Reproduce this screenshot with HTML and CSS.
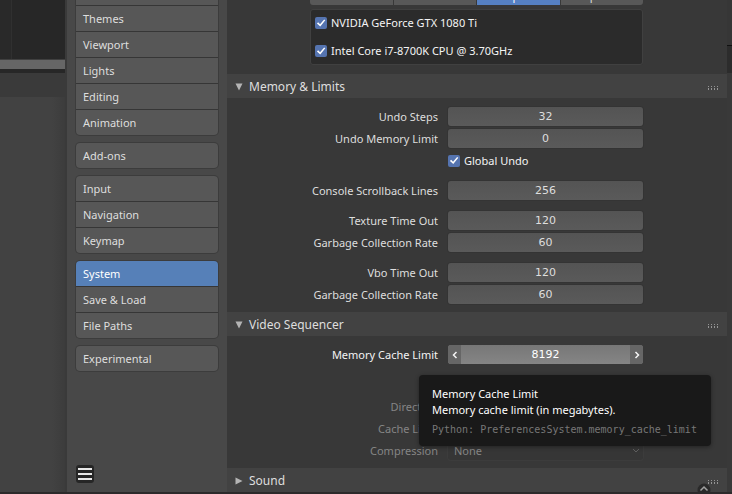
FILE: index.html
```html
<!DOCTYPE html>
<html lang="en">
<head>
<meta charset="utf-8">
<title>Preferences</title>
<link rel="stylesheet" href="styles.css">
</head>
<body>
<div class="app">
  <div class="backdrop">
    <div class="backdrop-timeline"></div>
    <div class="backdrop-divider"></div>
    <div class="backdrop-header"></div>
    <div class="backdrop-editor"></div>
  </div>

  <nav class="sidebar">
    <div class="nav-group nav-group-scrolled">
      <div class="nav-stub" aria-hidden="true"></div>
      <button class="nav-item">Themes</button>
      <button class="nav-item">Viewport</button>
      <button class="nav-item">Lights</button>
      <button class="nav-item">Editing</button>
      <button class="nav-item">Animation</button>
    </div>
    <div class="nav-group">
      <button class="nav-item">Add-ons</button>
    </div>
    <div class="nav-group">
      <button class="nav-item">Input</button>
      <button class="nav-item">Navigation</button>
      <button class="nav-item">Keymap</button>
    </div>
    <div class="nav-group">
      <button class="nav-item active" aria-current="page">System</button>
      <button class="nav-item">Save &amp; Load</button>
      <button class="nav-item">File Paths</button>
    </div>
    <div class="nav-group">
      <button class="nav-item">Experimental</button>
    </div>
    <button class="menu-button" aria-label="Menu">
      <svg width="18" height="18" viewBox="0 0 18 18">
        <rect width="18" height="18" rx="3" fill="#262626"/>
        <path d="M2 4h14M2 9h14M2 14h14" stroke="#e8e8e8" stroke-width="2"/>
      </svg>
    </button>
  </nav>

  <main class="panel">
    <div class="devices">
      <div class="segments">
        <button class="segment">None</button>
        <button class="segment">CUDA</button>
        <button class="segment active">OptiX</button>
        <button class="segment">OpenCL</button>
      </div>
      <div class="device-list">
        <label class="check bright"><input type="checkbox" checked>NVIDIA GeForce GTX 1080 Ti</label>
        <label class="check bright"><input type="checkbox" checked>Intel Core i7-8700K CPU @ 3.70GHz</label>
      </div>
    </div>

    <section>
      <h2 class="section-head">
        <svg class="arrow" width="8" height="8" viewBox="0 0 8 8"><path d="M0.5 0.5h7L4 7.5z" fill="#b4b4b4"/></svg>
        Memory &amp; Limits
        <span class="grip"></span>
      </h2>
      <div class="section-body">
        <div class="rows">
          <div class="row"><label for="undo-steps">Undo Steps</label><input class="number" id="undo-steps" type="text" value="32"></div>
          <div class="row"><label for="undo-memory">Undo Memory Limit</label><input class="number" id="undo-memory" type="text" value="0"></div>
          <div class="row"><span></span><label class="check bright in-row"><input type="checkbox" checked>Global Undo</label></div>
        </div>
        <div class="rows">
          <div class="row"><label for="scrollback">Console Scrollback Lines</label><input class="number" id="scrollback" type="text" value="256"></div>
        </div>
        <div class="rows">
          <div class="row"><label for="texture-time">Texture Time Out</label><input class="number" id="texture-time" type="text" value="120"></div>
          <div class="row"><label for="texture-rate">Garbage Collection Rate</label><input class="number" id="texture-rate" type="text" value="60"></div>
        </div>
        <div class="rows">
          <div class="row"><label for="vbo-time">Vbo Time Out</label><input class="number" id="vbo-time" type="text" value="120"></div>
          <div class="row"><label for="vbo-rate">Garbage Collection Rate</label><input class="number" id="vbo-rate" type="text" value="60"></div>
        </div>
      </div>
    </section>

    <section>
      <h2 class="section-head">
        <svg class="arrow" width="8" height="8" viewBox="0 0 8 8"><path d="M0.5 0.5h7L4 7.5z" fill="#b4b4b4"/></svg>
        Video Sequencer
        <span class="grip"></span>
      </h2>
      <div class="section-body">
        <div class="rows">
          <div class="row">
            <label class="bright" for="cache-limit">Memory Cache Limit</label>
            <div class="stepper">
              <button class="step" aria-label="Decrease"><svg width="6" height="8" viewBox="0 0 6 8"><path d="M4.5 1L1.5 4l3 3"/></svg></button>
              <input id="cache-limit" type="text" value="8192">
              <button class="step" aria-label="Increase"><svg width="6" height="8" viewBox="0 0 6 8"><path d="M1.5 1l3 3-3 3"/></svg></button>
              <div class="tooltip" role="tooltip">
                <p>Memory Cache Limit</p>
                <p>Memory cache limit (in megabytes).</p>
                <p class="python">Python: PreferencesSystem.memory_cache_limit</p>
              </div>
            </div>
          </div>
        </div>
        <div class="rows disabled">
          <div class="row"></div>
          <div class="row"><label for="directory">Directory</label><input class="number" id="directory" type="text" disabled></div>
          <div class="row"><label for="disk-limit">Cache Limit</label><input class="number" id="disk-limit" type="text" disabled></div>
          <div class="row">
            <label for="compression">Compression</label>
            <div class="select">
              <select id="compression" disabled><option>None</option></select>
              <svg width="8" height="6" viewBox="0 0 8 6"><path d="M1 1l3 3 3-3"/></svg>
            </div>
          </div>
        </div>
      </div>
    </section>

    <section>
      <h2 class="section-head">
        <svg class="arrow" width="8" height="8" viewBox="0 0 8 8"><path d="M0.5 0.5v7L7.5 4z" fill="#b4b4b4"/></svg>
        Sound
        <span class="grip"></span>
      </h2>
    </section>

    <button class="expand" aria-label="Show header">
      <svg width="14" height="14" viewBox="0 0 14 14">
        <circle cx="7" cy="7" r="6.5" fill="#2a2a2a"/>
        <path d="M3.500 7.500L7 4l3.500 3.500" fill="none" stroke="#a0a0a0" stroke-width="1.5"/>
      </svg>
    </button>
  </main>

  <div class="edge">
    <div class="edge-top"></div>
    <div class="edge-dark"></div>
    <div class="edge-rest"></div>
  </div>
</div>
</body>
</html>
```
FILE: styles.css
```css
* {
  box-sizing: border-box;
}

body {
  margin: 0;
  background: #2c2a2b;
  color: #dedede;
  font-family: "Noto Sans", sans-serif;
  font-size: 11px;
  line-height: 16px;
}

button,
input,
select {
  margin: 0;
  padding: 0;
  border: 0;
  color: inherit;
  font: inherit;
}

.app {
  display: grid;
  grid-template-columns: 67px 160px minmax(0, 1fr) 5px;
  height: 100vh;
  padding-bottom: 2px;
  overflow: hidden;
}

/* Editors behind the preferences window */
.backdrop {
  display: flex;
  flex-direction: column;
  border-right: 2px solid #3a3a3a;
  background: #424242;
}

.backdrop-timeline {
  height: 59px;
  margin-left: 11px;
  border-left: 1px solid #303030;
  background: #272727;
  box-shadow: -11px 0 #292929;
}

.backdrop-divider {
  height: 14px;
  border-top: 1px solid #404040;
  border-bottom: 4px solid #272727;
  background: #666;
}

.backdrop-header {
  height: 24px;
  background: #3a3a3a;
}

.backdrop-editor {
  flex: 1;
  background: linear-gradient(to right, #424242 80%, #3c3c3c);
}

/* Navigation */
.sidebar {
  display: flex;
  flex-direction: column;
  gap: 8px;
  padding: 0 9px;
  background: #484848;
}

.nav-group {
  display: flex;
  flex-direction: column;
  gap: 1px;
  overflow: hidden;
  border-radius: 4px;
  background: #363636;
  box-shadow: 0 0 0 1px #3c3c3c;
}

.nav-group-scrolled {
  border-radius: 0 0 4px 4px;
}

.nav-stub {
  height: 5px;
  background: #575757;
}

.nav-item {
  height: 25px;
  padding: 0 7px;
  background: #575757;
  text-align: left;
}

.nav-item.active {
  background: #5680b8;
  color: #fff;
}

.menu-button {
  width: 18px;
  height: 18px;
  margin: auto 0 9px;
  background: none;
}

.menu-button svg,
.expand svg {
  display: block;
}

/* Settings */
.panel {
  position: relative;
  overflow: hidden;
  background: #383838;
}

.devices {
  padding: 0 84px 9px 83px;
}

.segments {
  display: flex;
  align-items: flex-end;
  gap: 1px;
  height: 5px;
  margin-bottom: 4px;
  overflow: hidden;
  border-radius: 0 0 3px 3px;
}

.segment {
  flex: 1;
  height: 18px;
  background: #585858;
}

.segment.active {
  background: #5680c2;
  color: #fff;
}

.device-list {
  border-radius: 3px;
  background: #2b2b2b;
  box-shadow: inset 0 0 0 1px #404040;
}

.check {
  display: flex;
  align-items: center;
  gap: 4px;
  height: 28px;
  padding-left: 5px;
}

.check.in-row {
  height: 19px;
  padding-left: 0;
}

.bright {
  color: #f4f4f4;
}

.check input {
  width: 12px;
  height: 12px;
  appearance: none;
  border-radius: 2px;
  background: #5574b0;
}

.check input::before {
  content: "";
  display: block;
  height: 12px;
  background: #fff;
  clip-path: polygon(16% 54%, 26% 44%, 42% 60%, 76% 20%, 86% 28%, 44% 80%);
}

.section-head {
  display: flex;
  align-items: center;
  gap: 6px;
  height: 24px;
  margin: 0;
  padding: 2px 8px 0;
  background: #424242;
  font-size: 12px;
  font-weight: normal;
}

.grip {
  width: 11px;
  height: 5px;
  margin-left: auto;
  background:
    linear-gradient(#424242, #424242) 0 2px / 100% 1px no-repeat,
    repeating-linear-gradient(to right, #959595 0 1px, transparent 1px 3px) 0 1px / 100% 4px no-repeat;
}

.section-body {
  display: flex;
  flex-direction: column;
  gap: 11px;
  padding: 9px 84px 8px 83px;
}

.rows {
  display: flex;
  flex-direction: column;
  gap: 3px;
}

.row {
  display: grid;
  grid-template-columns: 128px minmax(0, 1fr);
  column-gap: 10px;
  align-items: center;
  height: 19px;
}

.row > label:first-child {
  text-align: right;
  white-space: nowrap;
}

.number,
.stepper input {
  font-family: "DejaVu Sans", sans-serif;
  text-align: center;
}

.number {
  width: 100%;
  height: 19px;
  border-radius: 3px;
  background: linear-gradient(#545454, #5a5a5a);
  box-shadow: 0 0 0 1px #343434;
}

.stepper {
  position: relative;
  display: flex;
  height: 19px;
  border-radius: 3px;
  background: linear-gradient(#777, #858585);
  color: #fff;
}

.stepper input {
  flex: 1;
  min-width: 0;
  background: none;
}

.step {
  display: grid;
  place-items: center;
  width: 13px;
  border-radius: 3px 0 0 3px;
  background: #666;
}

.step:last-of-type {
  border-radius: 0 3px 3px 0;
}

.step path {
  fill: none;
  stroke: #f4f4f4;
  stroke-width: 1.5;
}

.disabled {
  color: #858585;
}

.disabled .number {
  background: #404040;
}

.select {
  display: flex;
  align-items: center;
  height: 19px;
  padding: 0 3px 0 6px;
  border-radius: 3px;
  background: #363636;
  box-shadow: 0 0 0 1px #3c3c3c;
}

.select select {
  flex: 1;
  appearance: none;
  background: none;
  opacity: 1;
}

.select path {
  fill: none;
  stroke: #606060;
}

.tooltip {
  position: absolute;
  z-index: 1;
  top: 30px;
  left: -29px;
  padding: 11px 14px 8px 13px;
  border-radius: 4px;
  background: #191919;
  box-shadow: 0 1px 4px #0006;
  white-space: nowrap;
}

.tooltip p {
  margin: 0;
}

.tooltip .python {
  margin-top: 4px;
  color: #777;
  font-family: "DejaVu Sans Mono", monospace;
  font-size: 10px;
}

.expand {
  position: absolute;
  right: 16px;
  bottom: -5px;
  background: none;
}

/* Editor edge visible at the right */
.edge {
  display: flex;
  flex-direction: column;
}

.edge-top {
  height: 45px;
  background: #363636;
}

.edge-dark {
  height: 28px;
  border-top: 1px solid #111;
  background: #2c2c2c;
}

.edge-rest {
  flex: 1;
  background: #393939;
}
```
